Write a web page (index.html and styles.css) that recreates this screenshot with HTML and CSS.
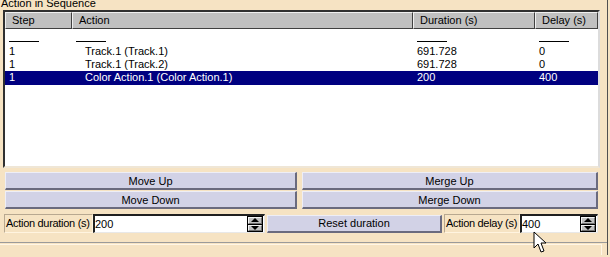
FILE: index.html
```html
<!DOCTYPE html>
<html lang="en">
<head>
    <meta charset="UTF-8">
    <title>Action in Sequence</title>
    <link rel="stylesheet" href="styles.css">
</head>
<body>
    <div class="window">
        <div class="title">Action in Sequence</div>

        <div class="list">
            <div class="list-head">
                <div class="head-cell">Step</div>
                <div class="head-cell">Action</div>
                <div class="head-cell">Duration (s)</div>
                <div class="head-cell">Delay (s)</div>
            </div>
            <div class="row marks">
                <span class="mark"></span>
                <span class="mark"></span>
                <span class="mark"></span>
                <span class="mark"></span>
            </div>
            <div class="row">
                <span>1</span>
                <span class="action">Track.1 (Track.1)</span>
                <span>691.728</span>
                <span>0</span>
            </div>
            <div class="row">
                <span>1</span>
                <span class="action">Track.1 (Track.2)</span>
                <span>691.728</span>
                <span>0</span>
            </div>
            <div class="row selected">
                <span>1</span>
                <span class="action">Color Action.1 (Color Action.1)</span>
                <span>200</span>
                <span>400</span>
            </div>
        </div>

        <div class="buttons">
            <button class="btn">Move Up</button>
            <button class="btn">Merge Up</button>
            <button class="btn">Move Down</button>
            <button class="btn">Merge Down</button>
        </div>

        <div class="fields">
            <div class="label label-duration">Action duration (s)</div>
            <div class="spin-input input-duration">
                <span class="value">200</span>
                <div class="spinner">
                    <div class="spin-btn"><span class="tri-up"></span></div>
                    <div class="spin-btn"><span class="tri-down"></span></div>
                </div>
            </div>
            <button class="btn btn-reset">Reset duration</button>
            <div class="label label-delay">Action delay (s)</div>
            <div class="spin-input input-delay">
                <span class="value">400</span>
                <div class="spinner">
                    <div class="spin-btn"><span class="tri-up"></span></div>
                    <div class="spin-btn"><span class="tri-down"></span></div>
                </div>
            </div>
        </div>

        <div class="bottom-panel"><div class="bottom-box"></div></div>

        <svg class="cursor" width="14" height="24" viewBox="0 0 14 24">
            <path d="M1 1 L1 17 L5 13 L8 21 L11 20 L8 12 L13 12 Z" fill="#fff" stroke="#000" stroke-width="1"/>
        </svg>
    </div>
</body>
</html>
```

FILE: styles.css
```css
* {
    margin: 0;
    padding: 0;
    box-sizing: border-box;
}

body {
    background: #f6e3c3;
    font-family: "Liberation Sans", Arial, sans-serif;
    font-size: 11px;
    color: #000;
    overflow: hidden;
}

.window {
    position: relative;
    width: 608px;
    height: 257px;
    border-right: 1px solid #505050;
}

.title {
    height: 10px;
    line-height: 10px;
    padding-left: 1px;
    margin-top: -2px;
    margin-bottom: 2px;
}

/* list view */

.list {
    margin-left: 3px;
    width: 597px;
    height: 158px;
    background: #fff;
    border-top: 2px solid #303030;
    border-left: 2px solid #303030;
    border-right: 2px solid #dcdcdc;
    border-bottom: 2px solid #efe6d6;
}

.list-head,
.row {
    display: grid;
    grid-template-columns: 67px 341px 122px 63px;
}

.list-head {
    height: 16px;
    background: #c0c0c0;
}

.head-cell {
    padding-left: 6px;
    line-height: 15px;
    border-top: 1px solid #f0f0f0;
    border-left: 1px solid #f0f0f0;
    border-right: 1px solid #404040;
    border-bottom: 1px solid #404040;
}

.row {
    height: 13px;
    line-height: 12px;
}

.row span {
    padding-left: 4px;
    white-space: nowrap;
}

.row .action {
    padding-left: 13px;
}

.marks {
    height: 17px;
    align-items: end;
    padding-bottom: 3px;
}

.row .mark {
    display: block;
    width: 30px;
    height: 1px;
    margin-left: 4px;
    padding: 0;
    background: #000;
}

.row.selected {
    height: 14px;
    line-height: 13px;
    background: #000080;
    color: #fff;
}

/* push buttons */

.buttons {
    display: grid;
    grid-template-columns: 292px 296px;
    column-gap: 5px;
    row-gap: 1px;
    margin: 4px 0 0 5px;
}

.btn {
    height: 18px;
    font-family: inherit;
    font-size: 11px;
    color: #000;
    background: #d2d2e6;
    border-top: 1px solid #eeeef6;
    border-left: 1px solid #eeeef6;
    border-right: 2px solid #6a6a7e;
    border-bottom: 2px solid #6a6a7e;
}

/* duration / delay row */

.fields {
    display: flex;
    align-items: center;
    margin: 5px 0 0 4px;
    height: 19px;
}

.label {
    height: 19px;
    line-height: 17px;
    padding-left: 1px;
    letter-spacing: -0.3px;
    border-top: 1px solid #b8a890;
    border-left: 1px solid #b8a890;
    border-right: 1px solid #fff4e0;
    border-bottom: 1px solid #fff4e0;
    white-space: nowrap;
    overflow: hidden;
}

.label-duration { width: 89px; }
.label-delay { width: 76px; margin-left: 2px; }

.spin-input {
    display: flex;
    align-items: center;
    justify-content: space-between;
    height: 19px;
    background: #fff;
    border-top: 2px solid #202020;
    border-left: 2px solid #202020;
    border-right: 1px solid #e8e8e8;
    border-bottom: 1px solid #e8e8e8;
}

.input-duration { width: 172px; }
.input-delay { width: 78px; }

.value {
    line-height: 14px;
    padding-top: 1px;
    align-self: flex-start;
}

.spinner {
    width: 16px;
    height: 16px;
    margin-right: 1px;
    border: 1px solid #000;
    display: flex;
    flex-direction: column;
    background: #000;
    gap: 1px;
}

.spin-btn {
    flex: 1;
    display: flex;
    align-items: center;
    justify-content: center;
    background: #c0c0c0;
    border-top: 1px solid #f4f4f4;
    border-left: 1px solid #f4f4f4;
    border-right: 1px solid #707070;
    border-bottom: 1px solid #707070;
}

.tri-up {
    border-left: 4px solid transparent;
    border-right: 4px solid transparent;
    border-bottom: 4px solid #000;
}

.tri-down {
    border-left: 4px solid transparent;
    border-right: 4px solid transparent;
    border-top: 4px solid #000;
}

.btn-reset {
    width: 175px;
    height: 18px;
    margin-left: 2px;
}

/* lower frame */

.bottom-panel {
    margin-top: 9px;
    border-top: 1px solid #9a9a9a;
    height: 20px;
    padding-top: 1px;
}

.bottom-box {
    width: 602px;
    height: 20px;
    border-top: 1px solid #fff6e6;
    border-right: 1px solid #fff6e6;
}

.cursor {
    position: absolute;
    left: 533px;
    top: 233px;
}
```
